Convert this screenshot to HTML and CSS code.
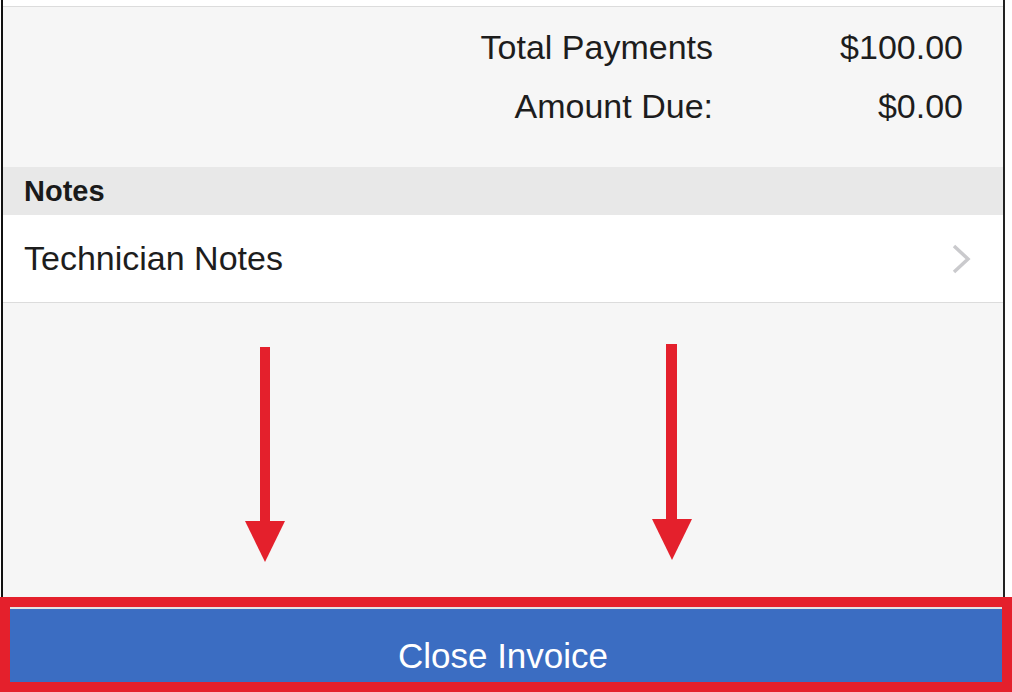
FILE: index.html
```html
<!DOCTYPE html>
<html lang="en">
<head>
    <meta charset="UTF-8">
    <meta name="viewport" content="width=device-width, initial-scale=1.0">
    <title>Invoice</title>
    <link rel="stylesheet" href="styles.css">
</head>
<body>
<div class="screen">
    <div class="top-strip"></div>

    <div class="totals">
        <div class="total-row">
            <span class="label">Total Payments</span>
            <span class="value">$100.00</span>
        </div>
        <div class="total-row">
            <span class="label">Amount Due:</span>
            <span class="value">$0.00</span>
        </div>
    </div>

    <div class="section-header">Notes</div>
    <div class="list-row">
        <span>Technician Notes</span>
        <svg class="chevron" width="20" height="30" viewBox="0 0 20 30">
            <polyline points="3,2 17,15 3,28" fill="none" stroke="#cacacd" stroke-width="3.5"/>
        </svg>
    </div>

    <div class="filler"></div>

    <button class="close-btn">Close Invoice</button>
</div>

<!-- annotation overlay -->
<svg class="arrow arrow-left" width="40" height="216" viewBox="0 0 40 216">
    <rect x="15" y="0" width="10" height="176" fill="#e4202c"/>
    <polygon points="0,174 40,174 20,215" fill="#e4202c"/>
</svg>
<svg class="arrow arrow-right" width="40" height="217" viewBox="0 0 40 217">
    <rect x="14" y="0" width="11" height="177" fill="#e4202c"/>
    <polygon points="0,175 40,175 20,216" fill="#e4202c"/>
</svg>
<div class="highlight-box"></div>
</body>
</html>
```

FILE: styles.css
```css
* {
    margin: 0;
    padding: 0;
    box-sizing: border-box;
}
body {
    font-family: "Liberation Sans", Arial, sans-serif;
    background-color: #fff;
    width: 1012px;
    height: 692px;
    overflow: hidden;
    position: relative;
    color: #1d1d1d;
}
.screen {
    margin-left: 1px;
    width: 1004px;
    height: 692px;
    border-left: 2px solid #111;
    border-right: 2px solid #222;
    display: flex;
    flex-direction: column;
    background-color: #f6f6f6;
}
.top-strip {
    height: 7px;
    background-color: #fff;
    border-bottom: 1px solid #dcdcdc;
}
.totals {
    height: 160px;
    padding-top: 11px;
}
.total-row {
    display: grid;
    grid-template-columns: 1fr 250px;
    height: 59px;
    align-items: center;
    font-size: 34px;
    padding-right: 40px;
}
.total-row .label,
.total-row .value {
    text-align: right;
}
.section-header {
    height: 48px;
    background-color: #e8e8e8;
    font-size: 29px;
    font-weight: bold;
    padding-left: 21px;
    display: flex;
    align-items: center;
    color: #1a1a1a;
}
.list-row {
    height: 88px;
    background-color: #fff;
    border-bottom: 1px solid #dcdcdc;
    display: flex;
    align-items: center;
    justify-content: space-between;
    padding: 0 32px 0 21px;
    font-size: 34px;
}
.chevron {
    display: block;
}
.filler {
    flex: 1;
}
.close-btn {
    height: 96px;
    flex-shrink: 0;
    border: none;
    border-top: 2px solid #e2e2e2;
    background-color: #3b6dc2;
    color: #fff;
    font-family: "Liberation Sans", Arial, sans-serif;
    font-size: 35px;
    margin-bottom: -11px;
}
.arrow {
    position: absolute;
    display: block;
}
.arrow-left {
    left: 245px;
    top: 347px;
}
.arrow-right {
    left: 652px;
    top: 344px;
}
.highlight-box {
    position: absolute;
    left: 0;
    top: 597px;
    width: 1012px;
    height: 95px;
    border: 10px solid #e4202c;
}
```
